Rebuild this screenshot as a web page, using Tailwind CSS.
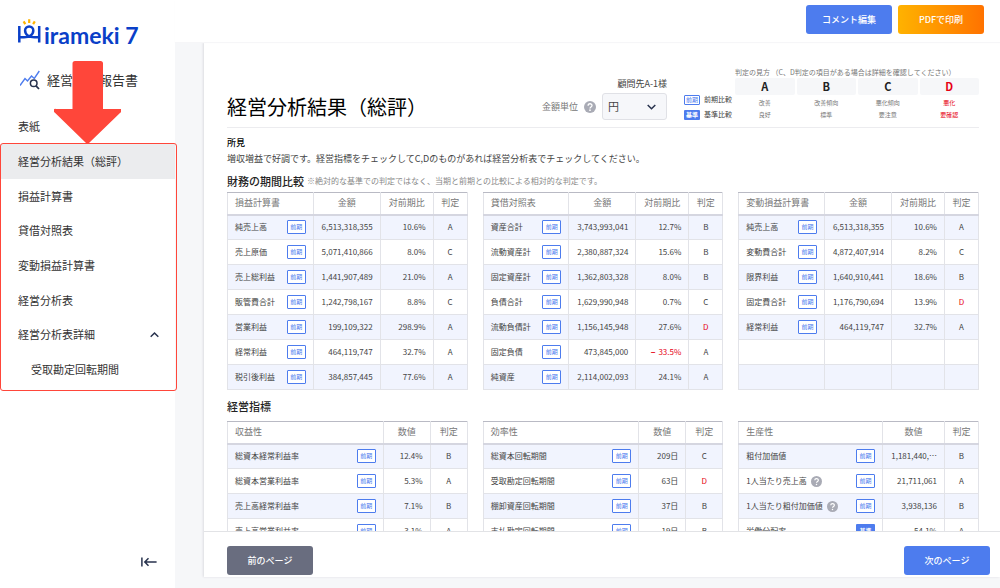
<!DOCTYPE html>
<html lang="ja">
<head>
  <meta charset="UTF-8" />
  <meta name="viewport" content="width=device-width, initial-scale=1.0" />
  <title>経営分析報告書</title>
  <script src="https://cdn.jsdelivr.net/npm/@tailwindcss/browser@4"></script>
</head>
<body class="flex h-screen overflow-hidden bg-[#f6f7f9] font-['Noto_Sans_CJK_JP',sans-serif] text-[#444]">

  <!-- Sidebar -->
  <aside class="flex w-[175px] shrink-0 flex-col bg-white">
    <a href="#" class="ml-[18px] mt-[18px] flex h-8 items-start text-[#0a3fc8]" aria-label="Hirameki 7">
      <svg class="h-[26px] w-[23px]" viewBox="0 0 23 26" fill="none">
        <g stroke="#ffb400" stroke-width="2.200">
          <path d="M5.600 3.400l1.700 2.700M11.200 1.300v3.600M16.800 3.400l-1.700 2.700" />
        </g>
        <g stroke="#0a3fc8" stroke-width="2.500">
          <path d="M1.300 8v16.500M21.200 8v16.500" />
          <path d="M1.300 19.300H6c5.500 0 9.300-2.800 9.300-6.800a4.100 4.100 0 0 0-8.200 0c0 4 3.800 6.800 9.300 6.800h4.800" />
        </g>
      </svg>
      <span class="ml-[3px] mt-[3px] font-['Lato'] text-[23px] font-bold leading-7">irameki 7</span>
    </a>

    <div class="mt-[18px] ml-5 flex h-6 items-center gap-[7px]">
      <svg class="h-5 w-5" viewBox="0 0 20 20" fill="none">
        <path d="M0 15.500L5 8.500l2.500 2.500 4-5 2.800 2.500L19.300 1" stroke="#4d7cee" stroke-width="1.400" />
        <circle cx="13.700" cy="13.300" r="3.300" stroke="#27324d" stroke-width="1.500" />
        <path d="M16 15.800l3 3.200" stroke="#27324d" stroke-width="1.700" />
      </svg>
      <span class="text-[13px] text-[#333]">経営分析報告書</span>
    </div>

    <nav class="mt-[17px] text-[11px] text-[#333]">
      <a href="#" class="flex h-[35px] items-center pl-[18px]">表紙</a>
      <div class="relative">
        <a href="#" class="flex h-[35px] items-center bg-[#ebecee] pl-[18px]" aria-current="page">経営分析結果（総評）</a>
        <a href="#" class="flex h-[34px] items-center pl-[18px]">損益計算書</a>
        <a href="#" class="flex h-[35px] items-center pl-[18px]">貸借対照表</a>
        <a href="#" class="flex h-[35px] items-center pl-[18px]">変動損益計算書</a>
        <a href="#" class="flex h-[34px] items-center pl-[18px]">経営分析表</a>
        <button type="button" class="flex h-[35px] w-full items-center justify-between pl-[18px] pr-4" aria-expanded="true">
          経営分析表詳細
          <svg class="h-2 w-[9px]" viewBox="0 0 9 8" fill="none" stroke="#27324d" stroke-width="1.500"><path d="M.7 5.800L4.500 2l3.800 3.800" /></svg>
        </button>
        <a href="#" class="flex h-[35px] items-center pl-[31px]">受取勘定回転期間</a>
        <!-- Highlight frame and arrow -->
        <div class="pointer-events-none absolute -right-0.5 -bottom-1 -top-px left-0 rounded-[3px] border border-[#ff463a]"></div>
        <svg class="pointer-events-none absolute bottom-full left-[54px] h-[83px] w-[67px]" viewBox="0 0 67 83" fill="#ff463a">
          <path d="M21 0h25.500a2.500 2.500 0 0 1 2.500 2.500V48h16.500a1.500 1.500 0 0 1 1 3.500L35.500 81.500a2.500 2.500 0 0 1-4 0L.7 51.500A1.500 1.500 0 0 1 2 48h16.500V2.500A2.500 2.500 0 0 1 21 0z" />
        </svg>
      </div>
    </nav>

    <button type="button" class="mr-[18px] mb-5 mt-auto self-end" aria-label="メニューを閉じる">
      <svg class="h-3 w-4" viewBox="0 0 16 12" fill="none" stroke="#27324d" stroke-width="1.500"><path d="M.9 1.500v9M15.600 6H4M7.500 2.300L3.800 6l3.700 3.700" /></svg>
    </button>
  </aside>

  <div class="flex min-w-0 flex-1 flex-col">
    <!-- Top bar -->
    <header class="z-10 flex h-[42px] shrink-0 items-start justify-end gap-1.5 bg-white pr-4 pt-[5px] text-[9px] font-medium text-white shadow-[0_1px_1px_#f6f6f8]">
      <button type="button" class="h-[29px] w-[86px] rounded-[3px] bg-[#4d7cee]">コメント編集</button>
      <button type="button" class="h-[29px] w-[86px] rounded-[3px] bg-linear-to-r from-[#ffb200] to-[#ff7200]">PDFで印刷</button>
    </header>

    <main class="mb-[11px] ml-[29px] flex min-h-0 flex-1 flex-col bg-white shadow-[-1px_0_2px_#dddee2]">
      <div class="min-h-0 flex-1 overflow-y-auto pl-[23px] pr-[21px] [scrollbar-width:none]">
        <div class="flex h-[86px] items-end border-b border-[#ececef]">
          <h1 class="mb-1.5 flex-1 whitespace-nowrap text-[20px] leading-7 text-black">経営分析結果（総評）</h1>

          <div class="mb-[7px] flex flex-col items-end text-[9px]">
            <p class="leading-[18px]">顧問先A-1様</p>
            <div class="flex items-center">
              <label for="unit" class="text-[#777]">金額単位</label>
              <svg class="ml-1.5 mr-1.5 h-3 w-3" viewBox="0 0 12 12"><use href="#help" /></svg>
              <div class="relative">
                <select id="unit" class="h-[27px] w-[65px] appearance-none rounded-[3px] border border-[#e0e1e6] bg-[#f6f7fa] pl-[5px] text-[11px]">
                  <option>円</option>
                  <option>千円</option>
                  <option>百万円</option>
                </select>
                <svg class="pointer-events-none absolute right-[11px] top-[10px] h-2 w-[9px]" viewBox="0 0 9 8" fill="none" stroke="#27324d" stroke-width="1.500"><path d="M.7 2L4.500 5.800 8.300 2" /></svg>
              </div>
            </div>
          </div>

          <div class="mb-[5px] ml-[17px] flex flex-col text-[7px]">
            <div class="flex h-[15px] items-center gap-1"><span class="flex h-[10px] w-4 items-center justify-center rounded-[1px] border border-[#4d7cee] text-[6px] text-[#4d7cee]">前期</span>前期比較</div>
            <div class="flex h-[15px] items-center gap-1"><span class="flex h-[10px] w-4 items-center justify-center rounded-[1px] bg-[#4d7cee] text-[6px] font-bold text-white">基準</span>基準比較</div>
          </div>

          <div class="mb-[6px] ml-[3px] w-[244px] text-[#777]">
            <p class="whitespace-nowrap text-[7px] leading-3">判定の見方 （C、D判定の項目がある場合は詳細を確認してください）</p>
            <dl class="grid grid-cols-4 gap-x-0.5 text-center text-[6px] leading-3">
              <div><dt class="mb-0.5 h-[17px] rounded-[2px] bg-[#f6f7f9] text-[11px] font-bold leading-[17px] text-[#222]">A</dt><dd>改善</dd><dd>良好</dd></div>
              <div><dt class="mb-0.5 h-[17px] rounded-[2px] bg-[#f6f7f9] text-[11px] font-bold leading-[17px] text-[#222]">B</dt><dd>改善傾向</dd><dd>標準</dd></div>
              <div><dt class="mb-0.5 h-[17px] rounded-[2px] bg-[#f6f7f9] text-[11px] font-bold leading-[17px] text-[#222]">C</dt><dd>悪化傾向</dd><dd>要注意</dd></div>
              <div class="text-[#e60012]"><dt class="mb-0.5 h-[17px] rounded-[2px] bg-[#f6f7f9] text-[11px] font-bold leading-[17px]">D</dt><dd>悪化</dd><dd>要確認</dd></div>
            </dl>
          </div>
        </div>

        <h2 class="mt-2 text-[9px] font-medium leading-[14px] text-black">所見</h2>
        <p class="mt-0.5 text-[9px] leading-[14px]">増収増益で好調です。経営指標をチェックしてC,Dのものがあれば経営分析表でチェックしてください。</p>

        <div class="mt-2 flex items-center gap-[3px] leading-[14px]">
          <h2 class="text-[11px] font-medium text-[#222]">財務の期間比較</h2>
          <p class="text-[8px] text-[#888]">※絶対的な基準での判定ではなく、当期と前期との比較による相対的な判定です。</p>
        </div>
        <div id="statements" class="mt-1 grid grid-cols-3 items-start gap-[15px]"></div>

        <h2 class="mt-[9px] text-[11px] font-medium leading-[14px] text-[#222]">経営指標</h2>
        <div id="indicators" class="mt-[8px] grid grid-cols-3 items-start gap-[15px]"></div>
      </div>

      <footer class="flex shrink-0 justify-between border-t border-[#e2e3e6] pb-0.5 pl-[23px] pr-[10px] pt-[14px] text-[9px] font-medium text-white">
        <button type="button" class="h-[29px] w-[86px] rounded-[3px] bg-[#696d7f]">前のページ</button>
        <button type="button" class="h-[29px] w-[86px] rounded-[3px] bg-[#4d7cee]">次のページ</button>
      </footer>
    </main>
  </div>

  <svg class="hidden">
    <symbol id="help" viewBox="0 0 12 12">
      <circle cx="6" cy="6" r="6" fill="#a9abb5" />
      <path d="M4.100 4.700c0-2.600 3.900-2.500 3.900-.2 0 1.400-2 1.500-2 2.900" fill="none" stroke="#fff" stroke-width="1.300" />
      <circle cx="6" cy="9.200" r=".85" fill="#fff" />
    </symbol>
  </svg>

  <script>
    const statements = [
      { title: '損益計算書', rows: [
        ['純売上高', '6,513,318,355', '10.6%', 'A'],
        ['売上原価', '5,071,410,866', '8.0%', 'C'],
        ['売上総利益', '1,441,907,489', '21.0%', 'A'],
        ['販管費合計', '1,242,798,167', '8.8%', 'C'],
        ['営業利益', '199,109,322', '298.9%', 'A'],
        ['経常利益', '464,119,747', '32.7%', 'A'],
        ['税引後利益', '384,857,445', '77.6%', 'A'],
      ]},
      { title: '貸借対照表', rows: [
        ['資産合計', '3,743,993,041', '12.7%', 'B'],
        ['流動資産計', '2,380,887,324', '15.6%', 'B'],
        ['固定資産計', '1,362,803,328', '8.0%', 'B'],
        ['負債合計', '1,629,990,948', '0.7%', 'C'],
        ['流動負債計', '1,156,145,948', '27.6%', 'D'],
        ['固定負債', '473,845,000', '-33.5%', 'A'],
        ['純資産', '2,114,002,093', '24.1%', 'A'],
      ]},
      { title: '変動損益計算書', rows: [
        ['純売上高', '6,513,318,355', '10.6%', 'A'],
        ['変動費合計', '4,872,407,914', '8.2%', 'C'],
        ['限界利益', '1,640,910,441', '18.6%', 'B'],
        ['固定費合計', '1,176,790,694', '13.9%', 'D'],
        ['経常利益', '464,119,747', '32.7%', 'A'],
        ['', '', '', ''],
        ['', '', '', ''],
      ]},
    ];

    const indicators = [
      { title: '収益性', cols: ['w-[47px]', 'w-[37px]'], rows: [
        ['総資本経常利益率', '12.4%', 'B'],
        ['総資本営業利益率', '5.3%', 'A'],
        ['売上高経常利益率', '7.1%', 'B'],
        ['売上高営業利益率', '3.1%', 'A'],
      ]},
      { title: '効率性', cols: ['w-[47px]', 'w-[37px]'], rows: [
        ['総資本回転期間', '209日', 'C'],
        ['受取勘定回転期間', '63日', 'D'],
        ['棚卸資産回転期間', '37日', 'B'],
        ['支払勘定回転期間', '19日', 'B'],
      ]},
      { title: '生産性', cols: ['w-[62px]', 'w-[34px]'], rows: [
        ['粗付加価値', '1,181,440,…', 'B'],
        ['1人当たり売上高', '21,711,061', 'A', 'help'],
        ['1人当たり粗付加価値', '3,938,136', 'B', 'help'],
        ['労働分配率', '54.1%', 'A', 'base'],
      ]},
    ];

    const th = 'border border-t-[#b9bac4] border-x-[#e2e3e8] border-b-2 border-b-[#d5d6e0] h-[22px] p-0 text-[9px] font-normal text-[#777]';
    const td = 'border border-[#e2e3e8] h-[25px] p-0';

    function nameCell(name, flag) {
      if (!name) return `<td class="${td}"></td>`;
      const help = flag === 'help' ? '<svg class="ml-1 h-[11px] w-[11px]" viewBox="0 0 12 12"><use href="#help" /></svg>' : '';
      const badge = flag === 'base'
        ? '<span class="ml-auto flex h-[14px] w-[19px] items-center justify-center rounded-[1px] bg-[#4d7cee] text-[6px] font-bold text-white">基準</span>'
        : '<span class="ml-auto flex h-[14px] w-[19px] items-center justify-center rounded-[1px] border border-[#4d7cee] bg-white text-[6px] text-[#4d7cee]">前期</span>';
      return `<td class="${td}"><div class="flex items-center pl-[7px] pr-[7px]">${name}${help}${badge}</div></td>`;
    }

    function valueCell(value) {
      if (value.startsWith('-')) {
        return `<td class="${td} pr-[7px] text-right text-[#e60012]"><span class="mr-[3px] font-bold">−</span>${value.slice(1)}</td>`;
      }
      return `<td class="${td} pr-[7px] text-right">${value}</td>`;
    }

    function gradeCell(grade) {
      return `<td class="${td} text-center ${grade === 'D' ? 'text-[#e60012]' : ''}">${grade}</td>`;
    }

    function table(head, body) {
      return `<table class="w-full table-fixed border-collapse whitespace-nowrap text-[8px] leading-3"><thead><tr>${head}</tr></thead><tbody>${body}</tbody></table>`;
    }

    document.getElementById('statements').innerHTML = statements.map(t => table(
      `<th class="${th} pl-[7px] text-left">${t.title}</th><th class="${th} w-[67px]">金額</th><th class="${th} w-[53px]">対前期比</th><th class="${th} w-[34px]">判定</th>`,
      t.rows.map(([name, amount, ratio, grade]) =>
        `<tr class="odd:bg-[#f1f4fe]">${nameCell(name)}${valueCell(amount)}${valueCell(ratio)}${gradeCell(grade)}</tr>`).join('')
    )).join('');

    document.getElementById('indicators').innerHTML = indicators.map(t => table(
      `<th class="${th} pl-[7px] text-left">${t.title}</th><th class="${th} ${t.cols[0]}">数値</th><th class="${th} ${t.cols[1]}">判定</th>`,
      t.rows.map(([name, value, grade, flag]) =>
        `<tr class="odd:bg-[#f1f4fe]">${nameCell(name, flag)}${valueCell(value)}${gradeCell(grade)}</tr>`).join('')
    )).join('');
  </script>
</body>
</html>
